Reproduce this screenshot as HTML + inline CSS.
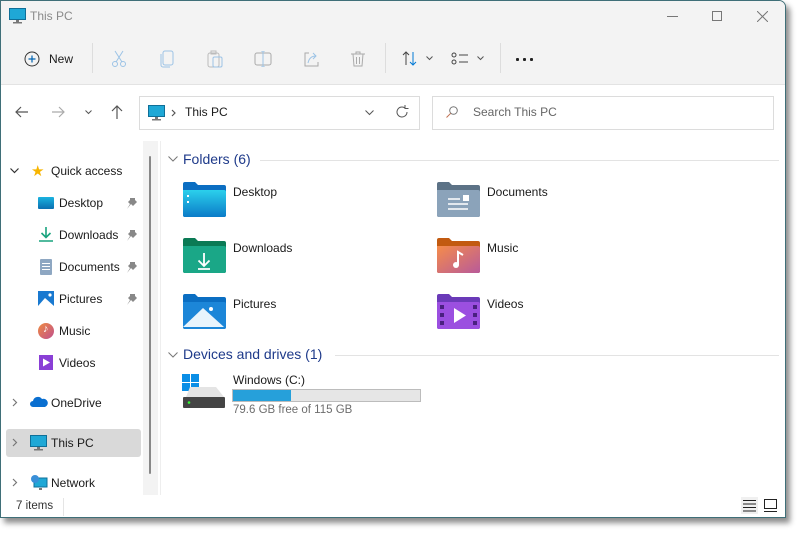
<!DOCTYPE html>
<html><head><style>
*{margin:0;padding:0;box-sizing:border-box}
body{width:801px;height:533px;background:#fff;position:relative;overflow:hidden;font-family:"Segoe UI","Liberation Sans",sans-serif;font-size:12px;color:#1a1a1a}
.a{position:absolute}
.win{left:0;top:0;width:786px;height:518px;background:#fff;border:1px solid #3f6f78;border-radius:0 7px 0 0;box-shadow:4px 5px 6px rgba(0,0,0,.45);overflow:hidden}
.t{position:absolute;white-space:nowrap}
.ico{position:absolute}
</style></head><body>
<div class="a win">
  <div class="a" style="left:0;top:0;width:786px;height:84px;background:#f3f3f3;border-bottom:1px solid #e3e3e3"></div>
  <svg class="ico" style="left:8px;top:7px" width="17" height="16"><rect x="0.5" y="0.5" width="16" height="11" fill="#1fa8d6" stroke="#0f6f98"/><rect x="7" y="12" width="3" height="2" fill="#777"/><rect x="4" y="14" width="9" height="1.5" fill="#777"/></svg>
  <div class="t" style="left:29px;top:8px;color:#8a8a8a;font-size:12px">This PC</div>
  <div class="a" style="left:666px;top:15px;width:11px;height:1px;background:#777"></div>
  <div class="a" style="left:711px;top:10px;width:10px;height:10px;border:1px solid #777"></div>
  <svg class="ico" style="left:756px;top:10px" width="11" height="11"><path d="M0 0L11 11M11 0L0 11" stroke="#777"/></svg>
  <svg class="ico" style="left:23px;top:50px" width="16" height="16"><circle cx="8" cy="8" r="7" fill="none" stroke="#333"/><path d="M8 4.5v7M4.5 8h7" stroke="#0063b1" stroke-width="1.2"/></svg>
  <div class="t" style="left:48px;top:51px;font-size:12px">New</div>
  <div class="a" style="left:91px;top:42px;width:1px;height:30px;background:#ddd"></div>
  <svg class="ico" style="left:110px;top:49px" width="16" height="18" fill="none" stroke="#9cc3e6"><circle cx="4" cy="14" r="2.5"/><circle cx="12" cy="14" r="2.5"/><path d="M5 12L12 1M11 12L4 1"/></svg>
  <svg class="ico" style="left:159px;top:49px" width="14" height="18" fill="none" stroke="#9cc3e6"><rect x="3" y="1" width="10" height="14" rx="2"/><path d="M1 4v11a2 2 0 0 0 2 2h7"/></svg>
  <svg class="ico" style="left:206px;top:49px" width="16" height="18" fill="none" stroke="#bbb"><rect x="1" y="3" width="11" height="14" rx="2"/><rect x="4" y="1" width="5" height="3"/><rect x="6" y="7" width="9" height="10" rx="1.5" stroke="#9cc3e6"/></svg>
  <svg class="ico" style="left:253px;top:50px" width="18" height="16" fill="none" stroke="#9cc3e6"><rect x="1" y="2" width="16" height="12" rx="2" stroke="#aaa"/><path d="M9 0v16M7 0h4M7 16h4"/></svg>
  <svg class="ico" style="left:302px;top:50px" width="16" height="16" fill="none" stroke="#9cc3e6"><path d="M6 2H2v13h13v-4" stroke="#aaa"/><path d="M5 12c1-5 4-7 8-7M10 2l3 3-3 3"/></svg>
  <svg class="ico" style="left:350px;top:50px" width="14" height="16" fill="none" stroke="#aaa"><path d="M0 3h14M5 3V1h4v2M2 3l1 12h8l1-12M5.5 6v7M8.5 6v7"/></svg>
  <div class="a" style="left:384px;top:42px;width:1px;height:30px;background:#ddd"></div>
  <svg class="ico" style="left:401px;top:50px" width="16" height="15" fill="none"><path d="M4 14V1M1 4l3-3 3 3" stroke="#444"/><path d="M11 1v13M8 11l3 3 3-3" stroke="#0078d4"/></svg>
  <svg class="ico" style="left:425px;top:55px" width="7" height="5"><path d="M0.5 0.5l3 3 3-3" fill="none" stroke="#555"/></svg>
  <svg class="ico" style="left:450px;top:51px" width="18" height="14" fill="none" stroke="#444"><rect x="1" y="1" width="4" height="4" rx="2"/><rect x="1" y="8" width="4" height="4" rx="2"/><path d="M8 3h9M8 10h9"/></svg>
  <svg class="ico" style="left:476px;top:55px" width="7" height="5"><path d="M0.5 0.5l3 3 3-3" fill="none" stroke="#555"/></svg>
  <div class="a" style="left:499px;top:42px;width:1px;height:30px;background:#ddd"></div>
  <svg class="ico" style="left:515px;top:57px" width="18" height="3" fill="#222"><rect x="0" y="0" width="3" height="3" rx="1"/><rect x="7" y="0" width="3" height="3" rx="1"/><rect x="14" y="0" width="3" height="3" rx="1"/></svg>
  <svg class="ico" style="left:14px;top:105px" width="14" height="12" fill="none" stroke="#555" stroke-width="1.2"><path d="M13 6H1M6 1L1 6l5 5"/></svg>
  <svg class="ico" style="left:50px;top:105px" width="14" height="12" fill="none" stroke="#aaa" stroke-width="1.2"><path d="M1 6h12M8 1l5 5-5 5"/></svg>
  <svg class="ico" style="left:84px;top:109px" width="7" height="5"><path d="M0.5 0.5l3 3 3-3" fill="none" stroke="#555"/></svg>
  <svg class="ico" style="left:110px;top:104px" width="12" height="14" fill="none" stroke="#555" stroke-width="1.2"><path d="M6 14V1M1 6l5-5 5 5"/></svg>
  <div class="a" style="left:138px;top:95px;width:281px;height:34px;border:1px solid #dcdcdc;background:#fff"></div>
  <svg class="ico" style="left:147px;top:104px" width="17" height="16"><rect x="0.5" y="0.5" width="16" height="11" fill="#1fa8d6" stroke="#0f6f98"/><rect x="7" y="12" width="3" height="2" fill="#777"/><rect x="4" y="14" width="9" height="1.5" fill="#777"/></svg>
  <svg class="ico" style="left:170px;top:108px" width="5" height="8"><path d="M1 1l3 3-3 3" fill="none" stroke="#555" stroke-width="1.2"/></svg>
  <div class="t" style="left:184px;top:104px;font-size:12px">This PC</div>
  <svg class="ico" style="left:364px;top:109px" width="9" height="6"><path d="M0.5 0.5l4 4 4-4" fill="none" stroke="#555"/></svg>
  <svg class="ico" style="left:394px;top:104px" width="14" height="14" fill="none" stroke="#555"><path d="M12 7a5 5 0 1 1-2-4M10 0v3.5h3.5"/></svg>
  <div class="a" style="left:431px;top:95px;width:342px;height:34px;border:1px solid #dcdcdc"></div>
  <svg class="ico" style="left:445px;top:105px" width="12" height="12" fill="none" stroke="#777"><circle cx="7.5" cy="4.5" r="3.8"/><path d="M4.7 7.3L0.5 11.5" stroke="#c07050"/></svg>
  <div class="t" style="left:472px;top:104px;color:#666;font-size:12px">Search This PC</div>
  <div class="a" style="left:5px;top:428px;width:135px;height:28px;background:#d9d9d9;border-radius:3px"></div>
  <div class="a" style="left:142px;top:140px;width:15px;height:354px;background:#f3f3f3"></div>
  <div class="a" style="left:148px;top:155px;width:2px;height:318px;background:#888;border-radius:1px"></div>
  <div class="a" style="left:159px;top:140px;width:1px;height:354px;background:#eee"></div>
  <svg class="ico" style="left:9px;top:167px" width="9" height="6"><path d="M0.5 0.5l4 4 4-4" fill="none" stroke="#333" stroke-width="1.2"/></svg>
  <div class="t" style="left:30px;top:161px;font-size:15px;color:#f7b500">★</div>
  <div class="t" style="left:50px;top:163px">Quick access</div>
  <div class="a" style="left:37px;top:196px;width:16px;height:12px;background:linear-gradient(#1ab3e0,#0b6fb0);border-radius:1px"></div>
  <div class="t" style="left:58px;top:195px">Desktop</div>
  <svg class="ico" style="left:38px;top:226px" width="14" height="15" fill="none" stroke="#19a37e" stroke-width="1.6"><path d="M7 0v10M2.5 6l4.5 4.5L11.5 6M0 14h14"/></svg>
  <div class="t" style="left:58px;top:227px">Downloads</div>
  <div class="a" style="left:39px;top:258px;width:12px;height:16px;background:#8ea7c2;border-radius:1px"></div>
  <div class="a" style="left:41px;top:262px;width:8px;height:1px;background:#fff;box-shadow:0 3px #fff,0 6px #fff"></div>
  <div class="t" style="left:58px;top:259px">Documents</div>
  <svg class="ico" style="left:37px;top:290px" width="16" height="15"><rect width="16" height="15" fill="#1979d0"/><path d="M0 15L7 7l9 8z" fill="#fff"/><circle cx="12" cy="4" r="1.6" fill="#fff"/></svg>
  <div class="t" style="left:58px;top:291px">Pictures</div>
  <div class="a" style="left:37px;top:322px;width:16px;height:16px;border-radius:50%;background:linear-gradient(135deg,#ef8a40,#c0508e)"></div>
  <div class="t" style="left:42px;top:322px;color:#fff;font-size:11px">♪</div>
  <div class="t" style="left:58px;top:323px">Music</div>
  <svg class="ico" style="left:38px;top:354px" width="14" height="15"><rect width="14" height="15" fill="#8a3fd6"/><path d="M4 3.5l7 4-7 4z" fill="#fff"/></svg>
  <div class="t" style="left:58px;top:355px">Videos</div>
  <svg class="ico" style="left:125px;top:197px" width="11" height="11" fill="#888"><path d="M4 0h5v2l2 2-4 4-2-2-4 5 3-5-2-2 2-2z"/></svg>
  <svg class="ico" style="left:125px;top:229px" width="11" height="11" fill="#888"><path d="M4 0h5v2l2 2-4 4-2-2-4 5 3-5-2-2 2-2z"/></svg>
  <svg class="ico" style="left:125px;top:261px" width="11" height="11" fill="#888"><path d="M4 0h5v2l2 2-4 4-2-2-4 5 3-5-2-2 2-2z"/></svg>
  <svg class="ico" style="left:125px;top:293px" width="11" height="11" fill="#888"><path d="M4 0h5v2l2 2-4 4-2-2-4 5 3-5-2-2 2-2z"/></svg>
  <svg class="ico" style="left:11px;top:397px" width="6" height="9"><path d="M1 1l3.5 3.5L1 8" fill="none" stroke="#777" stroke-width="1.2"/></svg>
  <svg class="ico" style="left:29px;top:395px" width="18" height="12"><path d="M3 11a3 3 0 0 1 0-6 5 5 0 0 1 9-2 4 4 0 0 1 3 8z" fill="#0a6fd0"/></svg>
  <div class="t" style="left:50px;top:395px">OneDrive</div>
  <svg class="ico" style="left:11px;top:437px" width="6" height="9"><path d="M1 1l3.5 3.5L1 8" fill="none" stroke="#777" stroke-width="1.2"/></svg>
  <svg class="ico" style="left:29px;top:434px" width="17" height="16"><rect x="0.5" y="0.5" width="16" height="11" fill="#1fa8d6" stroke="#0f6f98"/><rect x="7" y="12" width="3" height="2" fill="#777"/><rect x="4" y="14" width="9" height="1.5" fill="#777"/></svg>
  <div class="t" style="left:50px;top:435px">This PC</div>
  <svg class="ico" style="left:11px;top:477px" width="6" height="9"><path d="M1 1l3.5 3.5L1 8" fill="none" stroke="#777" stroke-width="1.2"/></svg>
  <svg class="ico" style="left:29px;top:473px" width="18" height="17"><rect x="4" y="4" width="13" height="9" fill="#1fa8d6" stroke="#0f6f98"/><circle cx="5" cy="5" r="4" fill="#3a8fd8"/><rect x="9" y="14" width="3" height="2" fill="#777"/></svg>
  <div class="t" style="left:50px;top:475px">Network</div>
  <div class="t" style="left:15px;top:499px;color:#333;font-size:11.5px">7 items</div>
  <div class="a" style="left:62px;top:497px;width:1px;height:18px;background:#e5e5e5"></div>
  <div class="a" style="left:740px;top:496px;width:17px;height:17px;background:#f0f0f0"></div>
  <svg class="ico" style="left:742px;top:499px" width="13" height="12" stroke="#222"><path d="M0 .5h13M0 4h13M0 7.5h13M0 11h13"/></svg>
  <svg class="ico" style="left:763px;top:498px" width="13" height="13" fill="none" stroke="#222"><rect x=".5" y=".5" width="12" height="9"/><path d="M0 12.5h13"/></svg>
  <svg class="ico" style="left:167px;top:155px" width="10" height="6"><path d="M0.5 0.5l4.5 4.5 4.5-4.5" fill="none" stroke="#777"/></svg>
  <div class="t" style="left:182px;top:150px;font-size:14px;color:#1e3a8a">Folders (6)</div>
  <div class="a" style="left:259px;top:159px;width:519px;height:1px;background:#e3e3e3"></div>
  <svg class="ico" style="left:182px;top:181px" width="43" height="35"><path d="M0 2a2 2 0 0 1 2-2h10l3 3h26a2 2 0 0 1 2 2v28a2 2 0 0 1-2 2H2a2 2 0 0 1-2-2z" fill="#0b6ec2"/><path d="M0 8h41a2 2 0 0 1 2 2v23a2 2 0 0 1-2 2H2a2 2 0 0 1-2-2z" fill="url(#gd)"/><defs><linearGradient id="gd" x1="0" y1="0" x2="0" y2="1"><stop offset="0" stop-color="#2bd0ec"/><stop offset="1" stop-color="#0b7bc8"/></linearGradient></defs><rect x="4" y="13" width="2" height="2" fill="#fff"/><rect x="4" y="19" width="2" height="2" fill="#fff"/></svg>
  <div class="t" style="left:232px;top:184px">Desktop</div>
  <svg class="ico" style="left:436px;top:181px" width="43" height="35"><path d="M0 2a2 2 0 0 1 2-2h10l3 3h26a2 2 0 0 1 2 2v28a2 2 0 0 1-2 2H2a2 2 0 0 1-2-2z" fill="#5c7286"/><path d="M0 8h41a2 2 0 0 1 2 2v23a2 2 0 0 1-2 2H2a2 2 0 0 1-2-2z" fill="#8ba3ba"/><path d="M11 17h12M11 22h20M11 27h20" stroke="#fff" stroke-width="1.5"/><rect x="26" y="13" width="6" height="6" fill="#fff"/></svg>
  <div class="t" style="left:486px;top:184px">Documents</div>
  <svg class="ico" style="left:182px;top:237px" width="43" height="35"><path d="M0 2a2 2 0 0 1 2-2h10l3 3h26a2 2 0 0 1 2 2v28a2 2 0 0 1-2 2H2a2 2 0 0 1-2-2z" fill="#0b7a55"/><path d="M0 8h41a2 2 0 0 1 2 2v23a2 2 0 0 1-2 2H2a2 2 0 0 1-2-2z" fill="#1aa787"/><path d="M21 15v13M15.5 22.5l5.5 5.5 5.5-5.5M15 31h12" fill="none" stroke="#fff" stroke-width="1.8"/></svg>
  <div class="t" style="left:232px;top:240px">Downloads</div>
  <svg class="ico" style="left:436px;top:237px" width="43" height="35"><path d="M0 2a2 2 0 0 1 2-2h10l3 3h26a2 2 0 0 1 2 2v28a2 2 0 0 1-2 2H2a2 2 0 0 1-2-2z" fill="#c25a10"/><path d="M0 8h41a2 2 0 0 1 2 2v23a2 2 0 0 1-2 2H2a2 2 0 0 1-2-2z" fill="url(#gm)"/><defs><linearGradient id="gm" x1="0" y1="0" x2="1" y2="1"><stop offset="0" stop-color="#f58c4a"/><stop offset="1" stop-color="#b85a9a"/></linearGradient></defs><circle cx="19" cy="27" r="3" fill="#fff"/><path d="M21 27V14l5 3" fill="none" stroke="#fff" stroke-width="2"/></svg>
  <div class="t" style="left:486px;top:240px">Music</div>
  <svg class="ico" style="left:182px;top:293px" width="43" height="35"><path d="M0 2a2 2 0 0 1 2-2h10l3 3h26a2 2 0 0 1 2 2v28a2 2 0 0 1-2 2H2a2 2 0 0 1-2-2z" fill="#0b6ec2"/><path d="M0 8h41a2 2 0 0 1 2 2v23a2 2 0 0 1-2 2H2a2 2 0 0 1-2-2z" fill="#1c86d8"/><path d="M0 33L20 14l21 19z" fill="#e8f4fc"/><circle cx="28" cy="15" r="2" fill="#fff"/></svg>
  <div class="t" style="left:232px;top:296px">Pictures</div>
  <svg class="ico" style="left:436px;top:293px" width="43" height="35"><path d="M0 2a2 2 0 0 1 2-2h10l3 3h26a2 2 0 0 1 2 2v28a2 2 0 0 1-2 2H2a2 2 0 0 1-2-2z" fill="#6a3ab8"/><path d="M0 8h41a2 2 0 0 1 2 2v23a2 2 0 0 1-2 2H2a2 2 0 0 1-2-2z" fill="#9b4fe0"/><path d="M17 14l12 7.5-12 7.5z" fill="#fff"/><g fill="#4a2080"><rect x="3" y="11" width="4" height="4"/><rect x="3" y="19" width="4" height="4"/><rect x="3" y="27" width="4" height="4"/><rect x="36" y="11" width="4" height="4"/><rect x="36" y="19" width="4" height="4"/><rect x="36" y="27" width="4" height="4"/></g></svg>
  <div class="t" style="left:486px;top:296px">Videos</div>
  <svg class="ico" style="left:167px;top:351px" width="10" height="6"><path d="M0.5 0.5l4.5 4.5 4.5-4.5" fill="none" stroke="#777"/></svg>
  <div class="t" style="left:182px;top:345px;font-size:14px;color:#1e3a8a">Devices and drives (1)</div>
  <div class="a" style="left:334px;top:354px;width:444px;height:1px;background:#e3e3e3"></div>
  <svg class="ico" style="left:181px;top:373px" width="44" height="35"><g fill="#0a8ee6"><rect x="0" y="0" width="8" height="8"/><rect x="9" y="0" width="8" height="8"/><rect x="0" y="9" width="8" height="8"/><rect x="9" y="9" width="8" height="8"/></g><path d="M4 23l4-10h26l8 10z" fill="#e4e4e4"/><rect x="1" y="23" width="42" height="11" rx="1" fill="#444"/><circle cx="7" cy="28.5" r="1.3" fill="#3f3"/></svg>
  <div class="t" style="left:232px;top:372px">Windows (C:)</div>
  <div class="a" style="left:231px;top:388px;width:189px;height:13px;background:#e6e6e6;border:1px solid #bcbcbc"></div>
  <div class="a" style="left:232px;top:389px;width:58px;height:11px;background:#26a0da"></div>
  <div class="t" style="left:232px;top:403px;color:#6d6d6d;font-size:11.5px">79.6 GB free of 115 GB</div>
</div>
</body></html>
